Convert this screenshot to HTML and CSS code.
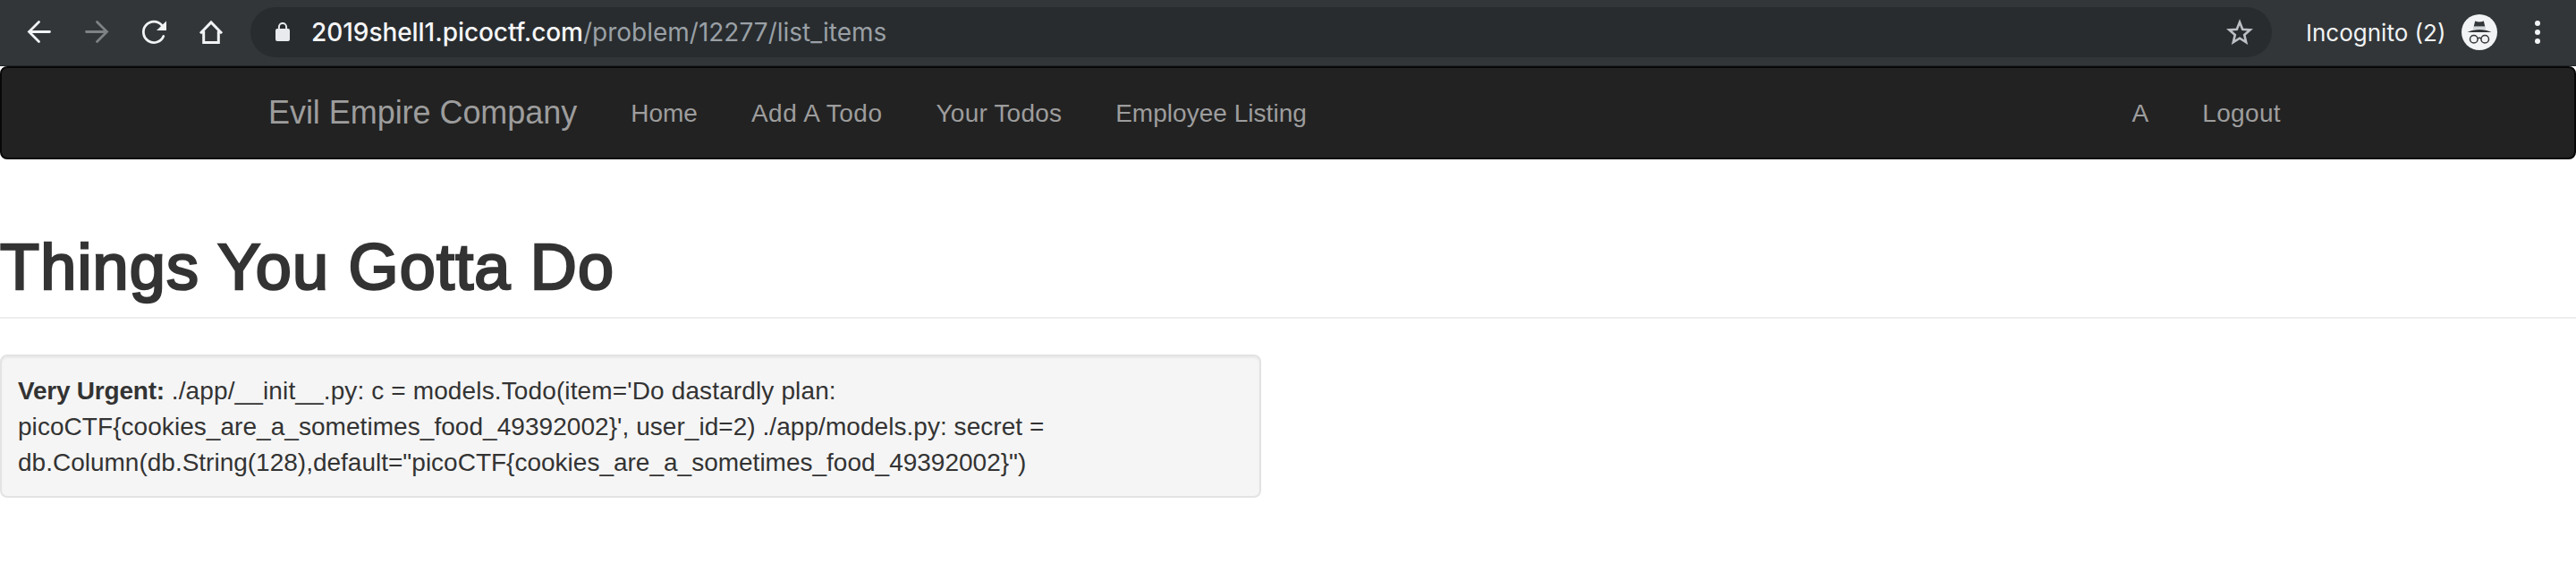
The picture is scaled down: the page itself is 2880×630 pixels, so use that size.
FILE: index.html
```html
<!DOCTYPE html>
<html lang="en">
<head>
<meta charset="utf-8">
<title>Evil Empire Company</title>
<link rel="stylesheet" href="styles.css">
</head>
<body>
<header class="toolbar">
  <div class="controls">
    <svg class="icon" viewBox="0 0 32 32"><path d="M27.500 15.500H4.500M15.500 4.500 4.500 15.500l11 11" /></svg>
    <svg class="icon dim" viewBox="0 0 32 32"><path d="M4.500 15.500h23M16.500 4.500 27.500 15.500l-11 11" /></svg>
    <svg class="icon" viewBox="0 0 32 32"><path d="M26.800 20.500A11.700 11.700 0 1 1 25 8.300"/><path class="solid" d="M30 3.500V14H19z"/></svg>
    <svg class="icon home" viewBox="0 0 32 32"><path d="M4 17.300 16 5l12 12.300M7.700 14.800v12.700h16.600V14.800"/></svg>
  </div>
  <div class="address">
    <svg class="lock" viewBox="0 0 16 22"><path class="body" d="M2 7h12a2 2 0 0 1 2 2v10a2 2 0 0 1-2 2H2a2 2 0 0 1-2-2V9a2 2 0 0 1 2-2z"/><path class="shackle" d="M3.900 8V5a4.100 4.100 0 0 1 8.200 0v3"/></svg>
    <span class="url"><span class="host">2019shell1.picoctf.com</span><span class="path">/problem/12277/list_items</span></span>
    <svg class="star" viewBox="0 0 30 30"><path d="m15 3.800 3.200 7.900 8.500.7-6.500 5.500 2 8.300L15 21.700l-7.200 4.500 2-8.300-6.500-5.500 8.500-.7z"/></svg>
  </div>
  <span class="profile">Incognito (2)</span>
  <svg class="avatar" viewBox="0 0 40 40"><circle cx="20" cy="20" r="20" fill="#f1f3f4"/><g fill="#323639"><path d="M15.200 7.500q4.800 2 9.600 0l1.500 6H13.700z"/><path d="M6.500 20q6-3 13.500-3t13.500 3z"/></g><path d="M13 15.300h14" stroke="#c9cccf" stroke-width="2"/><g fill="none" stroke="#323639" stroke-width="1.500"><circle cx="13.800" cy="27.800" r="4.300"/><circle cx="26.200" cy="27.800" r="4.300"/><path d="M18 27q2-1.300 4 0"/></g></svg>
  <svg class="menu" viewBox="0 0 6 26"><circle cx="3" cy="3" r="3"/><circle cx="3" cy="13" r="3"/><circle cx="3" cy="23" r="3"/></svg>
</header>
<nav class="navbar">
  <div class="container">
    <a class="brand">Evil Empire Company</a>
    <a class="link home-link">Home</a>
    <a class="link add-link">Add A Todo</a>
    <a class="link todos-link">Your Todos</a>
    <a class="link staff-link">Employee Listing</a>
    <a class="link user-link">A</a>
    <a class="link logout-link">Logout</a>
  </div>
</nav>
<main>
  <h1 class="title"><span>Things You Gotta Do</span></h1>
  <div class="well">
    <span class="line one"><strong>Very Urgent:</strong> ./app/__init__.py: c = models.Todo(item='Do dastardly plan:</span>
    <span class="line two">picoCTF{cookies_are_a_sometimes_food_49392002}', user_id=2) ./app/models.py: secret =</span>
    <span class="line three">db.Column(db.String(128),default="picoCTF{cookies_are_a_sometimes_food_49392002}")</span>
  </div>
</main>
</body>
</html>
```
FILE: styles.css
```css
* { box-sizing: border-box; }
body { margin: 0; background: #fff; color: #333; font: 28px/40px "Liberation Sans", Arial, sans-serif; }
svg { display: block; flex: none; }

.toolbar { display: flex; align-items: center; height: 74px; padding: 0 40px 1px 28px; background: #323639; border-bottom: 1px solid #242628; font-family: Inter, sans-serif; }
.controls { display: flex; gap: 32px; width: 252px; }
.icon { width: 32px; height: 32px; fill: none; stroke: #f1f3f4; stroke-width: 2.800; stroke-linecap: round; }
.icon.dim { stroke: #7f8284; }
.icon .solid { fill: #f1f3f4; stroke: none; }
.icon.home { stroke-linecap: butt; stroke-width: 3; }
.address { display: flex; align-items: center; width: 2260px; height: 56px; padding: 0 21px 0 28px; border-radius: 28px; background: #282c2f; }
.lock { width: 16px; height: 22px; }
.lock .body { fill: #e8eaed; }
.lock .shackle { fill: none; stroke: #e8eaed; stroke-width: 2; }
.url { margin-left: 24px; flex: 1; color: #9aa0a6; white-space: nowrap; }
.host { color: #f5f6f7; font-weight: 500; letter-spacing: -0.05px; }
.star { width: 30px; height: 30px; fill: none; stroke: #bdc1c6; stroke-width: 2.600; }
.profile { width: 174px; margin-left: 38px; padding-top: 2px; color: #f1f3f4; font-size: 26px; white-space: nowrap; }
.avatar { width: 40px; height: 40px; }
.menu { width: 6px; height: 26px; margin-left: auto; fill: #f1f3f4; }

.navbar { height: 104px; border: 2px solid #080808; border-radius: 8px; background: #222; color: #9d9d9d; }
.container { display: flex; align-items: center; width: 2340px; height: 100px; margin: 0 auto; padding-right: 30px; }
.brand { padding: 0 30px; font-size: 36px; letter-spacing: -0.05px; white-space: nowrap; }
.link { padding: 2px 30px 0; white-space: nowrap; }
.add-link { letter-spacing: 0.55px; }
.todos-link { letter-spacing: 0.2px; }
.staff-link { letter-spacing: 0.03px; }
.user-link { margin-left: auto; }
.logout-link { letter-spacing: 0.35px; }

.title { height: 178px; margin: 0 0 40px; padding-top: 80px; border-bottom: 2px solid #eee; font-size: 72px; font-weight: 400; line-height: 80px; letter-spacing: 1.2px; -webkit-text-stroke: 2.600px #333; }
.well { width: 1410px; height: 160px; padding: 19px 18px 17px; border: 2px solid #e3e3e3; border-radius: 8px; background: #f5f5f5; box-shadow: inset 0 2px 2px rgba(0,0,0,.05); }
.line { display: block; width: max-content; }
.one { letter-spacing: 0.13px; }
.one strong { letter-spacing: -0.22px; }
.two { letter-spacing: 0.05px; }
```
